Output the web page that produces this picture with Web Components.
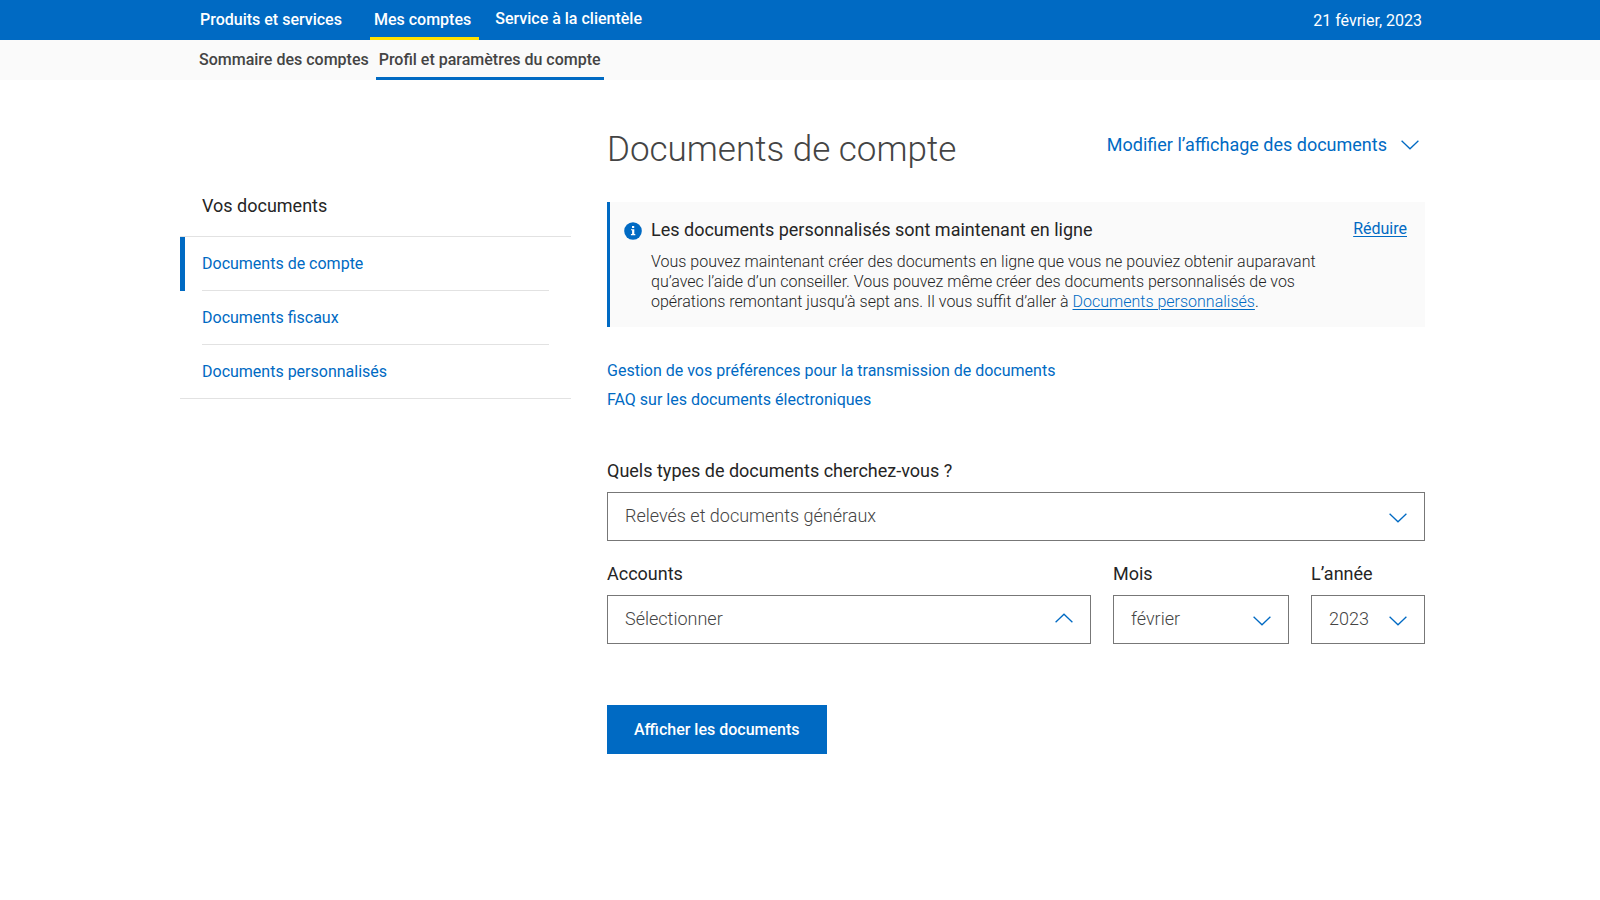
<!DOCTYPE html>
<html lang="fr">
<head>
<meta charset="utf-8">
<meta name="viewport" content="width=device-width, initial-scale=1">
<title>Documents de compte</title>
<style>
:root {
  --blue: #006ac3;
  --yellow: #ffe100;
  --ink: #252525;
  --soft-ink: #444;
  --panel: #fafafa;
  --rule: #e2e2e2;
  --page-left: 180px;
  --page-right: 175px;
}
body {
  margin: 0;
  background: #fff;
  color: var(--ink);
  font-family: Roboto, "Liberation Sans", sans-serif;
  font-size: 16px;
  line-height: 20px;
}
</style>
</head>
<body>
<documents-app></documents-app>
<script>
class BaseElement extends HTMLElement {
  constructor() {
    super();
    const root = this.attachShadow({ mode: "open" });
    root.innerHTML = `<style>*{box-sizing:border-box}</style>` + this.render();
  }
  render() { return ""; }
}

customElements.define("chevron-icon", class extends BaseElement {
  render() {
    return `<style>
      :host { display: block; width: 18px; height: 10px; color: var(--blue); }
      :host([up]) svg { transform: rotate(180deg); }
      svg { display: block; }
    </style>
    <svg width="18" height="10" viewBox="0 0 18 10" fill="none" stroke="currentColor" stroke-width="1.3" aria-hidden="true"><path d="M.6.8 9 8.8 17.4.8"/></svg>`;
  }
});

customElements.define("top-nav", class extends BaseElement {
  render() {
    return `<style>
      :host { display: block; background: var(--blue); color: #fff; }
      .bar { display: flex; justify-content: space-between; height: 40px; padding: 0 calc(var(--page-right) + 3px) 0 var(--page-left); }
      nav { display: flex; gap: 12px; padding-left: 16px; }
      a { color: inherit; text-decoration: none; font-weight: 500; line-height: 40px; padding: 0 4px; }
      a:first-child { margin-right: 12px; }
      a[aria-current] { box-shadow: inset 0 -3px var(--yellow); padding: 0 8px 0 4px; }
      a:last-child { line-height: 38px; }
      time { line-height: 42px; }
    </style>
    <div class="bar">
      <nav aria-label="Principal"><a href="#produits">Produits et services</a><a href="#comptes" aria-current="true">Mes comptes</a><a href="#service">Service à la clientèle</a></nav>
      <time datetime="2023-02-21">21 février, 2023</time>
    </div>`;
  }
});

customElements.define("sub-nav", class extends BaseElement {
  render() {
    return `<style>
      :host { display: block; background: var(--panel); color: var(--soft-ink); }
      nav { display: flex; gap: 4px; height: 40px; padding: 0 var(--page-right) 0 calc(var(--page-left) + 16px); }
      a { color: inherit; text-decoration: none; font-weight: 500; line-height: 40px; padding: 0 3px; }
      a[aria-current] { box-shadow: inset 0 -3px var(--blue); }
    </style>
    <nav aria-label="Comptes"><a href="#sommaire">Sommaire des comptes</a><a href="#profil" aria-current="page">Profil et paramètres du compte</a></nav>`;
  }
});

customElements.define("side-menu", class extends BaseElement {
  render() {
    return `<style>
      :host { display: block; padding-top: 62px; }
      h2 { margin: 0; padding: 12px 22px 18px; font-size: 18px; font-weight: 400; line-height: 24px; }
      ul { list-style: none; margin: 0; padding: 0; border: solid var(--rule); border-width: 1px 0; }
      li { height: 54px; padding: 0 22px; }
      li[data-active] { box-shadow: inset 5px 0 var(--blue); }
      li a { display: block; height: 54px; line-height: 54px; color: var(--blue); text-decoration: none; border-bottom: 1px solid var(--rule); }
      li:last-child, li:last-child a { height: 53px; border-bottom: 0; }
    </style>
    <h2>Vos documents</h2>
    <ul>
      <li data-active><a href="#compte" aria-current="page">Documents de compte</a></li>
      <li><a href="#fiscaux">Documents fiscaux</a></li>
      <li><a href="#personnalises">Documents personnalisés</a></li>
    </ul>`;
  }
});

customElements.define("info-banner", class extends BaseElement {
  render() {
    return `<style>
      :host { display: flex; gap: 9px; padding: 16px 18px 15px 14px; background: var(--panel); border-left: 3px solid var(--blue); }
      svg { flex: none; margin-top: 4px; }
      .content { flex: 1; }
      h2 { margin: 0; font-size: 18px; font-weight: 400; line-height: 24px; }
      p { margin: 10px 0 0; max-width: 674px; font-weight: 300; line-height: 20px; }
      a, button { color: var(--blue); text-decoration: underline; text-underline-offset: 2px; text-decoration-thickness: 1px; }
      button { align-self: flex-start; border: 0; background: none; padding: 0; font: inherit; line-height: 22px; cursor: pointer; }
    </style>
    <svg width="18" height="18" viewBox="0 0 18 18" aria-hidden="true"><circle cx="9" cy="9" r="8.8" fill="#006ac3"/><path fill="#fff" d="M8 4h2.2v2H8zM7 7.2h3.3v4.9h1v1.1H6.900v-1.100H8.100V8.300H7z"/></svg>
    <div class="content">
      <h2>Les documents personnalisés sont maintenant en ligne</h2>
      <p>Vous pouvez maintenant créer des documents en ligne que vous ne pouviez obtenir auparavant qu’avec l’aide d’un conseiller. Vous pouvez même créer des documents personnalisés de vos opérations remontant jusqu’à sept ans. Il vous suffit d’aller à <a href="#personnalises">Documents personnalisés</a>.</p>
    </div>
    <button type="button">Réduire</button>`;
  }
});

customElements.define("select-field", class extends BaseElement {
  render() {
    return `<style>
      :host { display: block; }
      label { display: block; margin-bottom: 9px; font-size: 18px; line-height: 24px; }
      .box { display: block; position: relative; }
      select { display: block; width: 100%; height: 49px; margin: 0; padding: 0 40px 2px 17px; border: 1px solid #777; border-radius: 0; background: #fff; color: var(--soft-ink); font: inherit; font-size: 18px; font-weight: 300; appearance: none; }
      chevron-icon { position: absolute; right: 18px; top: 21px; pointer-events: none; }
      chevron-icon[up] { top: 18px; }
    </style>
    <label for="field">${this.getAttribute("label")}</label>
    <span class="box"><select id="field"><option>${this.getAttribute("value")}</option></select><chevron-icon ${this.hasAttribute("open") ? "up" : ""}></chevron-icon></span>`;
  }
});

customElements.define("document-search", class extends BaseElement {
  render() {
    return `<style>
      :host { display: block; }
      .row { display: grid; grid-template-columns: minmax(0, 1fr) 176px 114px; gap: 22px; margin-top: 21px; }
      button { display: block; margin-top: 61px; height: 49px; padding: 0 27px; border: 0; background: var(--blue); color: #fff; font: inherit; font-weight: 500; cursor: pointer; }
    </style>
    <form>
      <select-field label="Quels types de documents cherchez-vous ?" value="Relevés et documents généraux"></select-field>
      <div class="row">
        <select-field label="Accounts" value="Sélectionner" open></select-field>
        <select-field label="Mois" value="février"></select-field>
        <select-field label="L’année" value="2023"></select-field>
      </div>
      <button type="button">Afficher les documents</button>
    </form>`;
  }
});

customElements.define("account-documents", class extends BaseElement {
  render() {
    return `<style>
      :host { display: block; }
      header { display: flex; justify-content: space-between; align-items: flex-start; height: 82px; padding-right: 6px; }
      h1 { margin: 0; font-size: 35px; font-weight: 300; line-height: 60px; color: var(--soft-ink); }
      header button { display: flex; align-items: center; gap: 14px; border: 0; background: none; padding: 13px 0; font: inherit; font-size: 18px; line-height: 24px; color: var(--blue); cursor: pointer; }
      .links { display: flex; flex-direction: column; align-items: flex-start; gap: 9px; margin: 34px 0 49px; }
      .links a { color: var(--blue); text-decoration: none; }
    </style>
    <header>
      <h1>Documents de compte</h1>
      <button type="button">Modifier l’affichage des documents<chevron-icon></chevron-icon></button>
    </header>
    <info-banner></info-banner>
    <div class="links">
      <a href="#preferences">Gestion de vos préférences pour la transmission de documents</a>
      <a href="#faq">FAQ sur les documents électroniques</a>
    </div>
    <document-search></document-search>`;
  }
});

customElements.define("documents-app", class extends BaseElement {
  render() {
    return `<style>
      :host { display: block; }
      .page { display: grid; grid-template-columns: minmax(0, 391fr) minmax(0, 818fr); gap: 36px; padding: 40px var(--page-right) 40px var(--page-left); }
    </style>
    <top-nav></top-nav>
    <sub-nav></sub-nav>
    <div class="page">
      <side-menu></side-menu>
      <main><account-documents></account-documents></main>
    </div>`;
  }
});
</script>
</body>
</html>
